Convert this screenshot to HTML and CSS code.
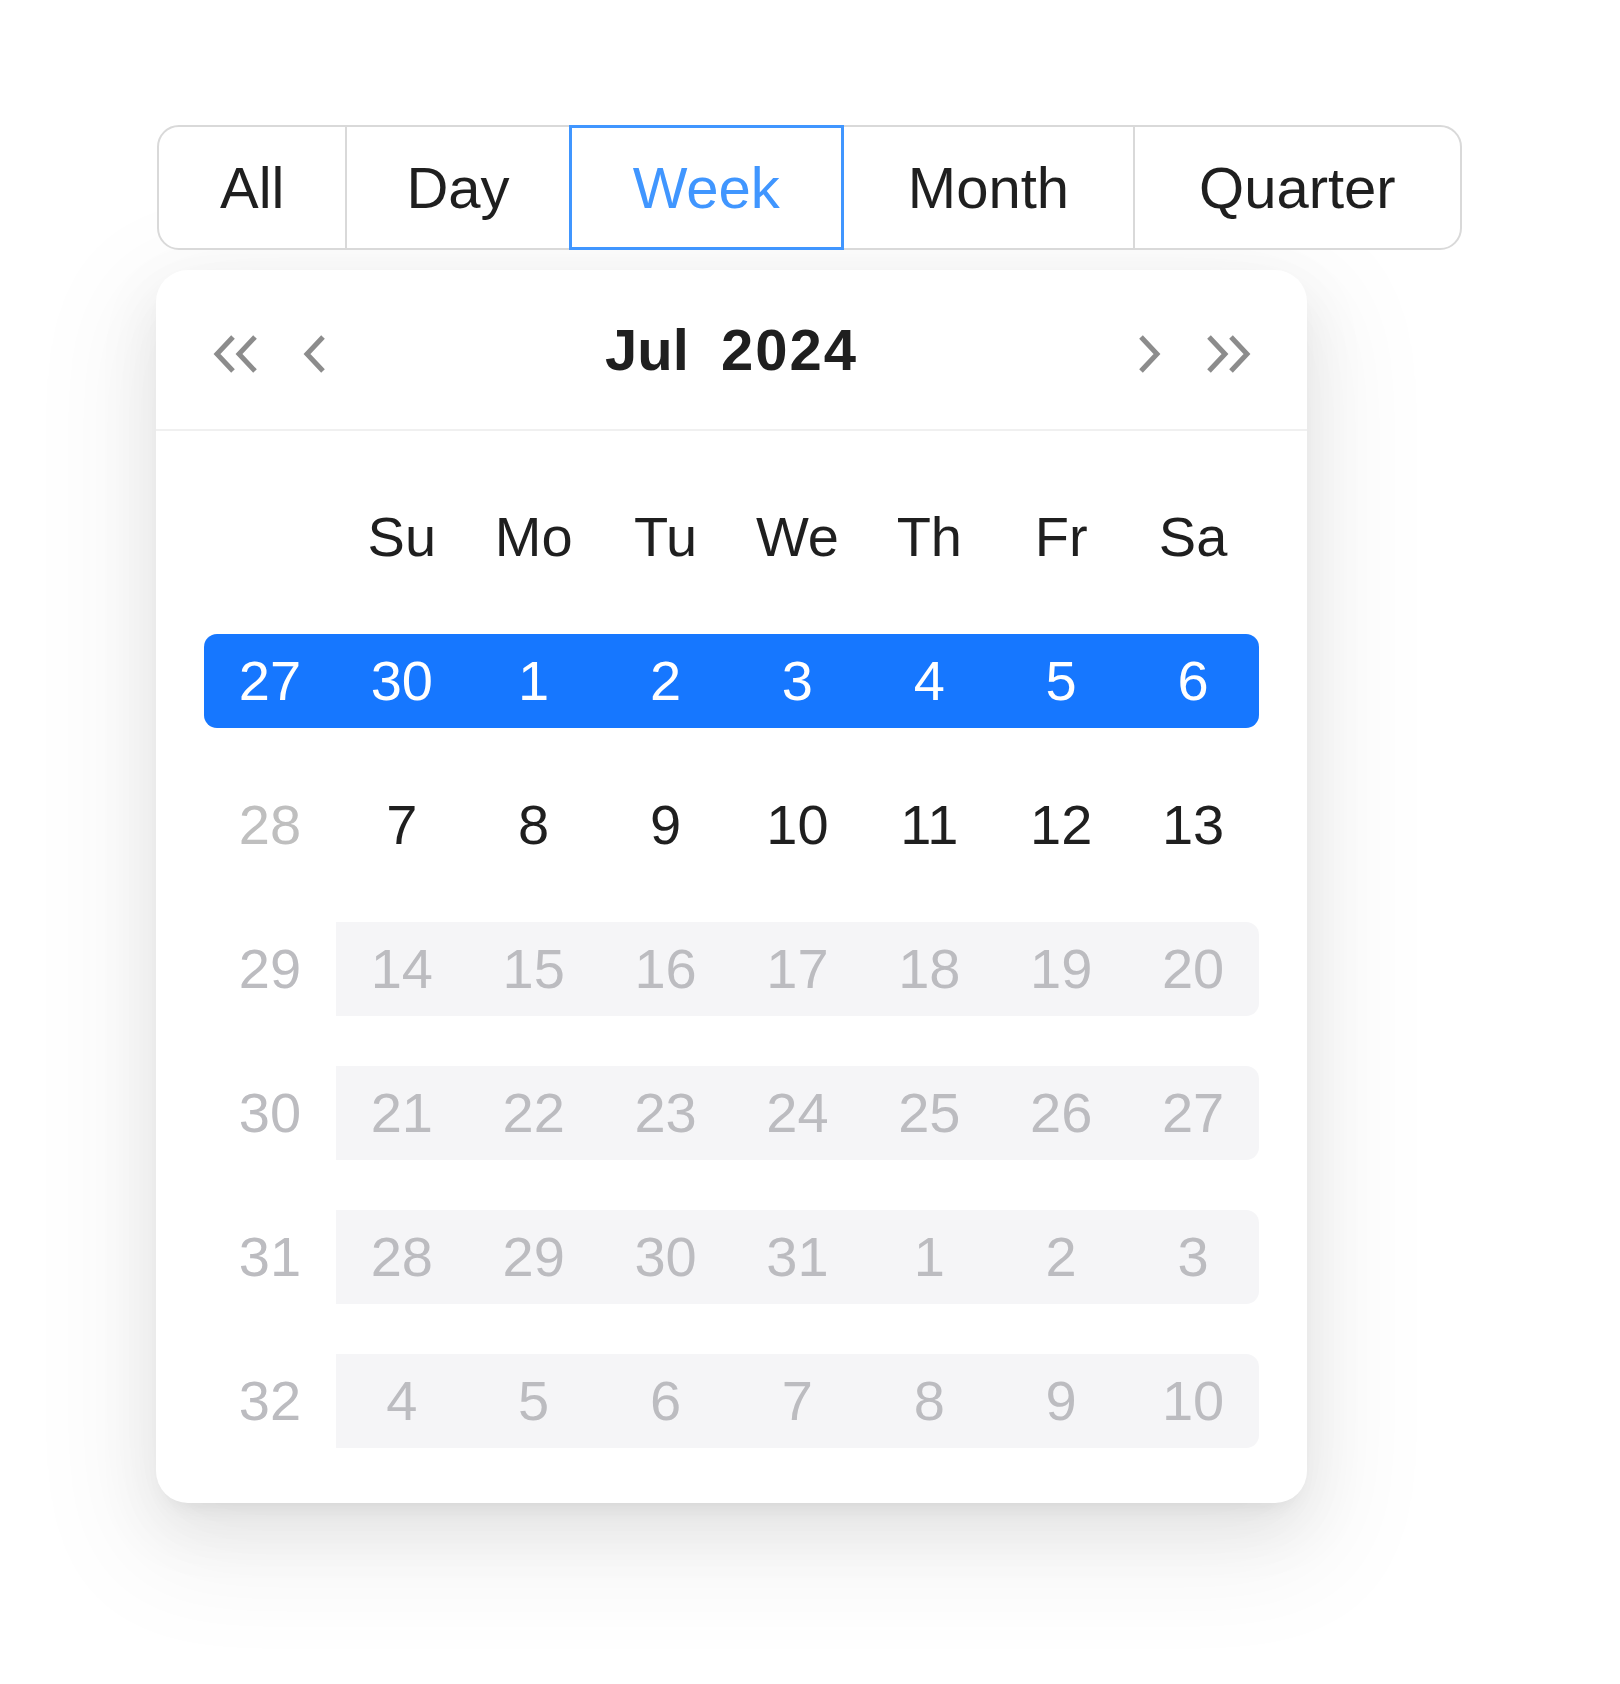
FILE: index.html
```html
<!DOCTYPE html>
<html lang="en">
<head>
    <meta charset="UTF-8">
    <meta name="viewport" content="width=device-width, initial-scale=1.0">
    <title>Week Picker</title>
    <link rel="stylesheet" href="styles.css">
</head>
<body>

<div class="page">
    <!-- Range type switch -->
    <div class="range-switch">
        <button class="seg">All</button>
        <button class="seg narrow">Day</button>
        <button class="seg active">Week</button>
        <button class="seg wide">Month</button>
        <button class="seg wide">Quarter</button>
    </div>

    <!-- Week picker dropdown -->
    <div class="picker">
        <div class="picker-head">
            <button class="nav" title="Previous year">
                <svg width="46" height="40" viewBox="0 0 46 40"><path d="M20 3 L4 20 L20 37 M42 3 L26 20 L42 37"/></svg>
            </button>
            <button class="nav" title="Previous month">
                <svg width="24" height="40" viewBox="0 0 24 40"><path d="M20 3 L4 20 L20 37"/></svg>
            </button>
            <div class="title"><span>Jul</span><span class="year">2024</span></div>
            <button class="nav" title="Next month">
                <svg width="24" height="40" viewBox="0 0 24 40"><path d="M4 3 L20 20 L4 37"/></svg>
            </button>
            <button class="nav" title="Next year">
                <svg width="46" height="40" viewBox="0 0 46 40"><path d="M4 3 L20 20 L4 37 M26 3 L42 20 L26 37"/></svg>
            </button>
        </div>

        <div class="picker-body">
            <div class="days-head">
                <div class="cell"></div>
                <div class="cell">Su</div>
                <div class="cell">Mo</div>
                <div class="cell">Tu</div>
                <div class="cell">We</div>
                <div class="cell">Th</div>
                <div class="cell">Fr</div>
                <div class="cell">Sa</div>
            </div>

            <div class="week selected">
                <div class="week-inner">
                    <div class="cell num">27</div>
                    <div class="cell">30</div><div class="cell">1</div><div class="cell">2</div><div class="cell">3</div>
                    <div class="cell">4</div><div class="cell">5</div><div class="cell">6</div>
                </div>
            </div>

            <div class="week">
                <div class="week-inner">
                    <div class="cell num">28</div>
                    <div class="cell">7</div><div class="cell">8</div><div class="cell">9</div><div class="cell">10</div>
                    <div class="cell">11</div><div class="cell">12</div><div class="cell">13</div>
                </div>
            </div>

            <div class="week off">
                <div class="week-inner">
                    <div class="cell num">29</div>
                    <div class="cell">14</div><div class="cell">15</div><div class="cell">16</div><div class="cell">17</div>
                    <div class="cell">18</div><div class="cell">19</div><div class="cell">20</div>
                </div>
            </div>

            <div class="week off">
                <div class="week-inner">
                    <div class="cell num">30</div>
                    <div class="cell">21</div><div class="cell">22</div><div class="cell">23</div><div class="cell">24</div>
                    <div class="cell">25</div><div class="cell">26</div><div class="cell">27</div>
                </div>
            </div>

            <div class="week off">
                <div class="week-inner">
                    <div class="cell num">31</div>
                    <div class="cell">28</div><div class="cell">29</div><div class="cell">30</div><div class="cell">31</div>
                    <div class="cell">1</div><div class="cell">2</div><div class="cell">3</div>
                </div>
            </div>

            <div class="week off">
                <div class="week-inner">
                    <div class="cell num">32</div>
                    <div class="cell">4</div><div class="cell">5</div><div class="cell">6</div><div class="cell">7</div>
                    <div class="cell">8</div><div class="cell">9</div><div class="cell">10</div>
                </div>
            </div>
        </div>
    </div>
</div>

</body>
</html>
```

FILE: styles.css
```css
body {
    font-family: 'Liberation Sans', Arial, sans-serif;
    background-color: #fff;
    color: #1f1f1f;
    margin: 0;
    padding: 0;
}

.page {
    box-sizing: border-box;
    min-height: 100vh;
    padding: 125px 0 0 156px;
}

/* segmented switch */
.range-switch {
    display: inline-flex;
    margin-left: 1px;
}

.seg {
    position: relative;
    box-sizing: border-box;
    height: 125px;
    padding: 0 61px;
    margin-left: -2px;
    font-family: inherit;
    font-size: 58px;
    line-height: 121px;
    color: #1f1f1f;
    background-color: #fff;
    border: 2px solid #d9d9d9;
    cursor: pointer;
}

.seg.narrow {
    padding: 0 59px;
}

.seg.wide {
    padding: 0 64px;
}

.seg:first-child {
    margin-left: 0;
    border-radius: 22px 0 0 22px;
}

.seg:last-child {
    border-radius: 0 22px 22px 0;
}

.seg.active {
    z-index: 1;
    padding: 0 62px;
    color: #4096ff;
    border-color: #4096ff;
    box-shadow: inset 0 0 0 1px #4096ff;
}

/* picker panel */
.picker {
    width: 1151px;
    margin-top: 20px;
    background-color: #fff;
    border-radius: 32px;
    box-shadow: 0 24px 64px rgba(0, 0, 0, 0.08),
                0 12px 24px -16px rgba(0, 0, 0, 0.12),
                0 36px 112px 32px rgba(0, 0, 0, 0.05);
}

.picker-head {
    display: flex;
    align-items: center;
    height: 159px;
    padding: 0 40px;
    border-bottom: 2px solid #f0f0f0;
}

.nav {
    width: 79px;
    height: 79px;
    padding: 8px 0 0;
    display: flex;
    align-items: center;
    justify-content: center;
    background: none;
    border: 0;
    cursor: pointer;
}

.nav svg path {
    fill: none;
    stroke: #8c8c8c;
    stroke-width: 5;
}

.title {
    flex: 1;
    text-align: center;
    font-size: 58px;
    font-weight: bold;
    color: #1f1f1f;
}

.title .year {
    margin-left: 32px;
    letter-spacing: 2px;
}

.picker-body {
    padding: 34px 48px 30px;
}

.days-head {
    display: grid;
    grid-template-columns: repeat(8, 1fr);
    height: 144px;
    align-items: center;
}

.cell {
    display: flex;
    align-items: center;
    justify-content: center;
    height: 94px;
    font-size: 56px;
    line-height: 1;
}

.week {
    display: flex;
    align-items: center;
    height: 144px;
}

.week-inner {
    flex: 1;
    display: grid;
    grid-template-columns: repeat(8, 1fr);
    height: 94px;
}

.cell.num {
    color: #bfbfbf;
}

.week.selected .week-inner {
    background-color: #1677ff;
    color: #fff;
    border-radius: 13px;
}

.week.selected .cell.num {
    color: #fff;
}

.week.off .cell {
    color: #bcbcc0;
}

.week.off .cell:not(.num) {
    background-color: #f5f5f7;
}

.week.off .cell:last-child {
    border-radius: 0 13px 13px 0;
}
```
